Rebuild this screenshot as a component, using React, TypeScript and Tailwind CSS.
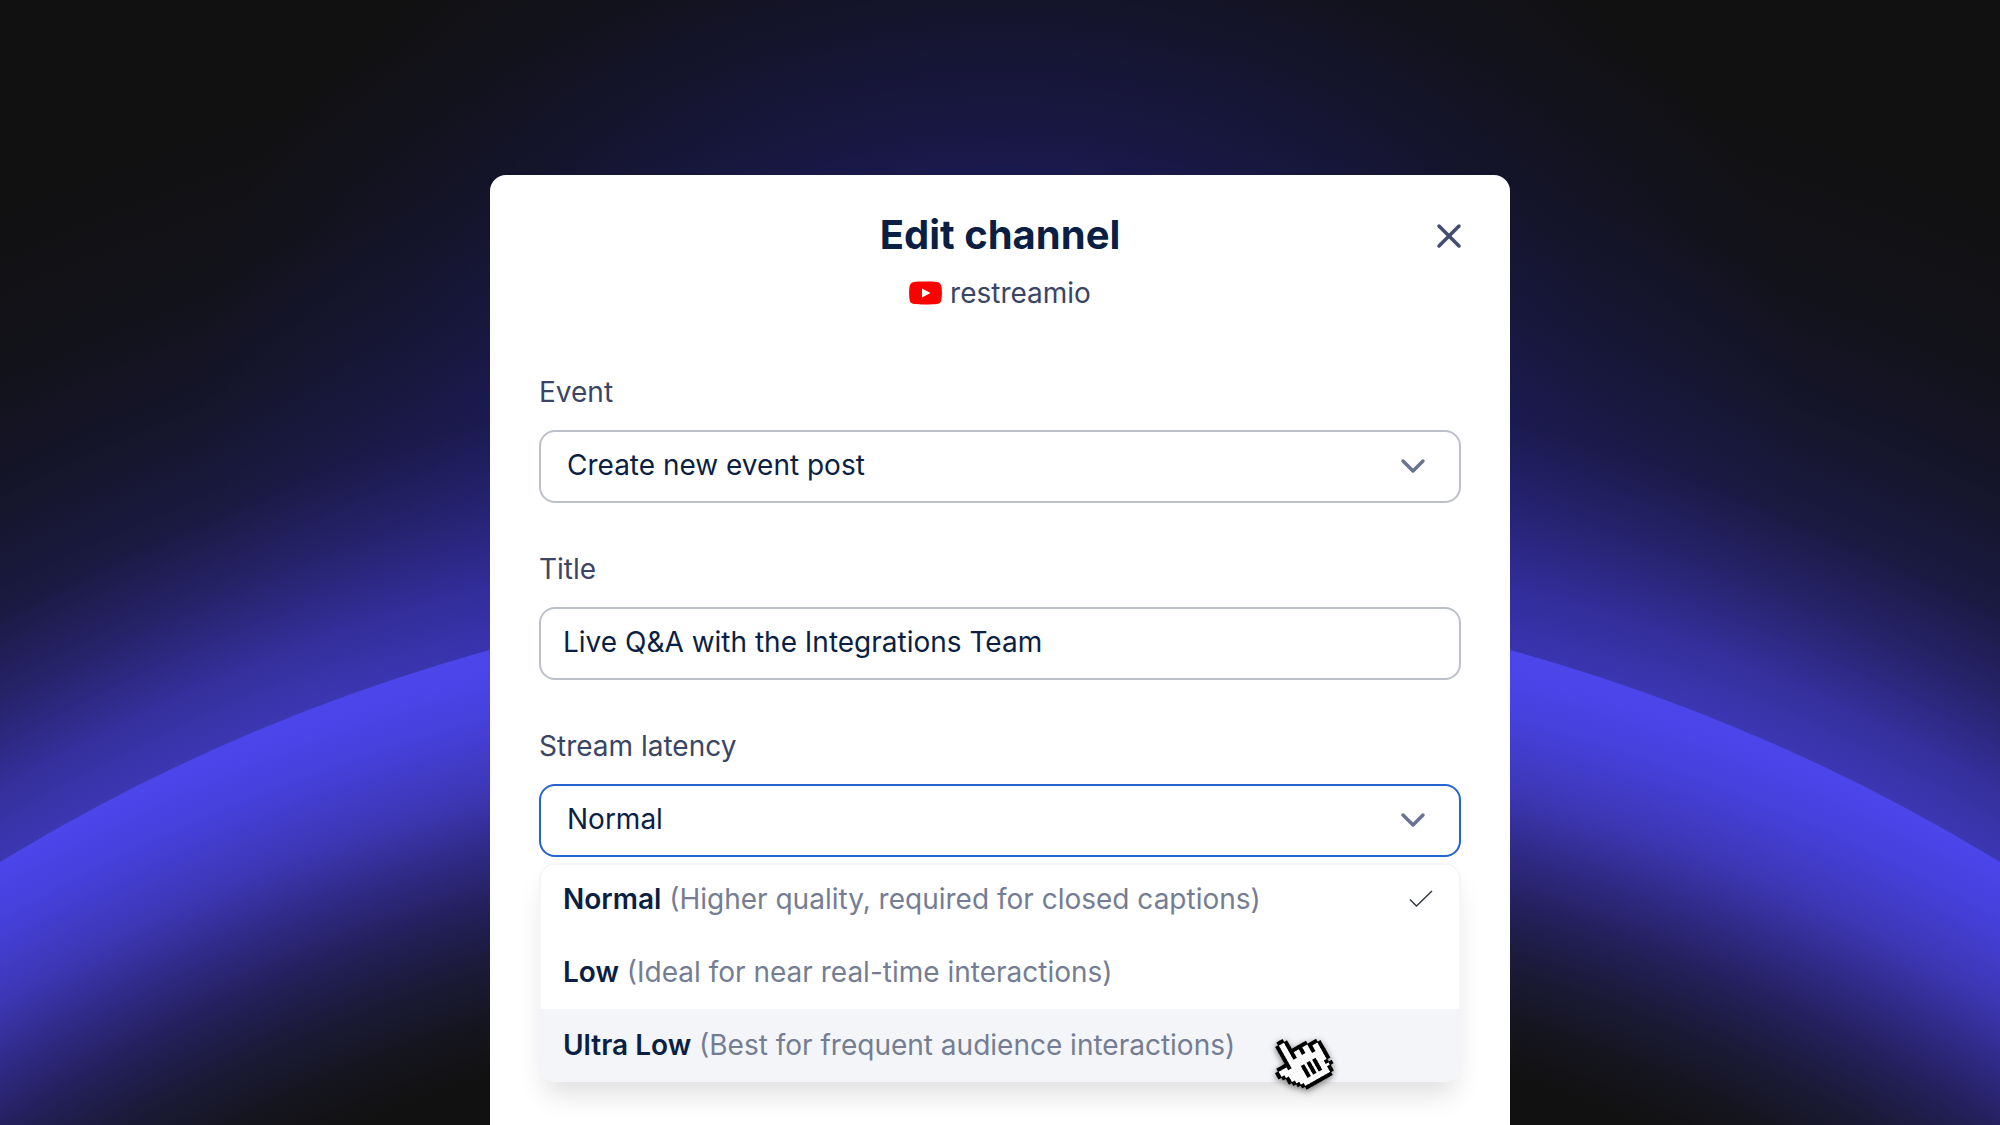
import { useState } from "react";
import { ChevronDown, X } from "lucide-react";

const latencyOptions = [
  { name: "Normal", hint: "(Higher quality, required for closed captions)" },
  { name: "Low", hint: "(Ideal for near real-time interactions)" },
  { name: "Ultra Low", hint: "(Best for frequent audience interactions)" },
];

// X = outline, o = fill
const handPixels = [
  ".....XX..........",
  "....XooX.........",
  "....XooX.........",
  "....XooX.........",
  "....XooXXXXXX....",
  "....XooXooXooXXX.",
  "....XooXooXooXooX",
  ".XXXXooooooooXooX",
  "XoooXoooooooooooX",
  "XoooooooooooooooX",
  ".XooooooXoXoXoooX",
  "..XoooooXoXoXoooX",
  "..XoooooXoXoXooX.",
  "...XooooXoXoXoooX",
  "....XooooooooooX.",
  ".....XoooooooooX.",
  "......XXXXXXXXX..",
];

const fieldClass =
  "h-[73px] w-full appearance-none rounded-2xl border-2 bg-white pb-[3px] text-[28px] text-[#0b1f44] outline-none";

function Backdrop() {
  return (
    <svg
      className="absolute inset-0 h-full w-full"
      viewBox="0 0 2000 1125"
      preserveAspectRatio="xMidYMin slice"
      aria-hidden="true"
    >
      <defs>
        <radialGradient id="halo" gradientUnits="userSpaceOnUse" cx="1000" cy="2501" r="2520">
          <stop offset="0.762" stopColor="#3c37b2" />
          <stop offset="0.785" stopColor="#35309d" />
          <stop offset="0.818" stopColor="#26236a" />
          <stop offset="0.85" stopColor="#1a1940" />
          <stop offset="0.89" stopColor="#15152a" />
          <stop offset="0.94" stopColor="#121219" />
          <stop offset="1" stopColor="#111111" />
        </radialGradient>
        <radialGradient
          id="glow"
          gradientUnits="userSpaceOnUse"
          cx="0"
          cy="0"
          r="1"
          gradientTransform="translate(1000 400) scale(800 620)"
        >
          <stop offset="0" stopColor="#2a2890" stopOpacity="0.6" />
          <stop offset="0.4" stopColor="#242290" stopOpacity="0.38" />
          <stop offset="0.75" stopColor="#201e90" stopOpacity="0.12" />
          <stop offset="1" stopColor="#201e90" stopOpacity="0" />
        </radialGradient>
        <radialGradient id="planet" gradientUnits="userSpaceOnUse" cx="1000" cy="2651" r="2070">
          <stop offset="0.798" stopColor="#111111" />
          <stop offset="0.821" stopColor="#14141c" />
          <stop offset="0.852" stopColor="#1b1a38" />
          <stop offset="0.879" stopColor="#24205c" />
          <stop offset="0.906" stopColor="#302b88" />
          <stop offset="0.932" stopColor="#3d37b5" />
          <stop offset="0.966" stopColor="#4640dc" />
          <stop offset="0.99" stopColor="#4c45ea" />
        </radialGradient>
      </defs>
      <rect width="2000" height="1125" fill="url(#halo)" />
      <rect width="2000" height="1125" fill="url(#glow)" />
      <circle cx="1000" cy="2501" r="1920" fill="url(#planet)" />
    </svg>
  );
}

function YouTubeIcon() {
  return (
    <svg width="33" height="24" viewBox="0 0 33 24" aria-hidden="true">
      <path
        d="M5 .9C9 .3 24 .3 28 .9c2.600.4 4 1.900 4.400 4.300.7 4 .7 9.600 0 13.600-.4 2.400-1.800 3.900-4.400 4.300-4 .6-19 .6-23 0C2.400 22.700 1 21.200.6 18.800c-.7-4-.7-9.600 0-13.600C1 2.800 2.400 1.300 5 .9Z"
        fill="#ff0000"
      />
      <path d="M13 7.500v9l8.500-4.500z" fill="#ffffff" />
    </svg>
  );
}

function HandPixels({ type, fill, size }: { type: string; fill: string; size: number }) {
  return (
    <g fill={fill}>
      {handPixels.map((row, y) =>
        row
          .split("")
          .map((p, x) =>
            p === type ? <rect key={`${x}-${y}`} x={x} y={y} width={size} height={size} /> : null
          )
      )}
    </g>
  );
}

function HandCursor() {
  return (
    <svg
      className="pointer-events-none absolute top-3 right-28 drop-shadow-[0_2px_3px_rgba(0,0,0,0.5)]"
      width="90"
      height="80"
      viewBox="0 0 90 80"
      aria-hidden="true"
    >
      <g transform="translate(3.2 29.5) rotate(-29.4) scale(3.25)">
        <HandPixels type="o" fill="#ffffff" size={1.1} />
        <HandPixels type="X" fill="#000000" size={1.2} />
      </g>
    </svg>
  );
}

function Chevron() {
  return (
    <ChevronDown
      size={40}
      strokeWidth={2.1}
      className="pointer-events-none absolute top-4 right-7 text-[#6b7391]"
    />
  );
}

export default function App() {
  const [title, setTitle] = useState("Live Q&A with the Integrations Team");
  const [latency, setLatency] = useState("Normal");

  return (
    <div className="relative flex h-screen flex-col items-center overflow-hidden bg-[#111111] pt-[175px] font-['Inter','Liberation_Sans',sans-serif]">
      <Backdrop />
      <main className="relative w-full max-w-[1020px] flex-1 rounded-t-2xl bg-white px-[49px] pt-9 text-[28px] leading-9 text-[#3a4566]">
        <header className="relative flex flex-col items-center gap-4">
          <h1 className="text-[40px] leading-[48px] font-bold text-[#0b1f44]">Edit channel</h1>
          <div className="flex items-center gap-2">
            <YouTubeIcon />
            <span>restreamio</span>
          </div>
          <button type="button" aria-label="Close" className="absolute top-[5px] -right-2">
            <X size={40} strokeWidth={2.1} className="text-[#434d70]" />
          </button>
        </header>

        <form className="mt-[63px] flex flex-col gap-12">
          <div className="flex flex-col gap-5">
            <label htmlFor="event">Event</label>
            <div className="relative">
              <select id="event" className={`${fieldClass} border-[#bcc0c9] pr-20 pl-[26px]`}>
                <option>Create new event post</option>
              </select>
              <Chevron />
            </div>
          </div>

          <div className="flex flex-col gap-5">
            <label htmlFor="title">Title</label>
            <input
              id="title"
              type="text"
              value={title}
              onChange={(e) => setTitle(e.target.value)}
              className={`${fieldClass} border-[#bcc0c9] px-[22px]`}
            />
          </div>

          <div className="flex flex-col gap-5">
            <label htmlFor="latency">Stream latency</label>
            <div className="relative">
              <select
                id="latency"
                value={latency}
                onChange={(e) => setLatency(e.target.value)}
                className={`${fieldClass} border-[#2563cf] pr-20 pl-[26px]`}
              >
                {latencyOptions.map((o) => (
                  <option key={o.name}>{o.name}</option>
                ))}
              </select>
              <Chevron />

              <ul
                role="listbox"
                aria-label="Stream latency"
                className="absolute inset-x-0 top-full mt-1.5 rounded-2xl bg-white shadow-[inset_0_0_0_2px_rgba(20,30,80,0.04),0_18px_28px_-6px_rgba(0,0,0,0.13)]"
              >
                {latencyOptions.map((o) => (
                  <li
                    key={o.name}
                    role="option"
                    aria-selected={o.name === latency}
                    onClick={() => setLatency(o.name)}
                    className="relative flex h-[73px] items-center justify-between pr-7 pb-0.5 pl-6 last:rounded-b-2xl last:bg-[#f3f5f8]"
                  >
                    <span className="text-[#747d93]">
                      <strong className="font-semibold text-[#0b1f44]">{o.name}</strong> {o.hint}
                    </span>
                    {o.name === latency && (
                      <svg width="24" height="18" viewBox="0 0 24 18" fill="none" aria-hidden="true">
                        <path d="M1 9.500 7.500 16 23 1" stroke="#2f3440" strokeWidth="1.400" />
                      </svg>
                    )}
                    {o.name === "Ultra Low" && <HandCursor />}
                  </li>
                ))}
              </ul>
            </div>
          </div>
        </form>
      </main>
    </div>
  );
}
